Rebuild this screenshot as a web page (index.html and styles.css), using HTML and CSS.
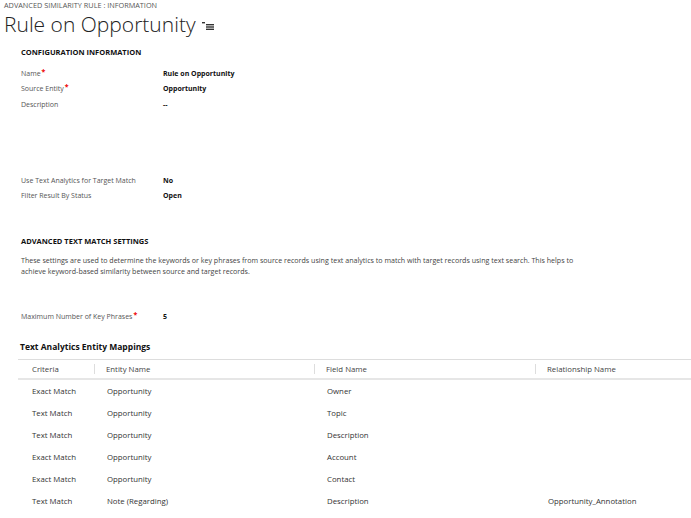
FILE: index.html
```html
<!DOCTYPE html>
<html lang="en">
<head>
    <meta charset="UTF-8">
    <title>Rule on Opportunity</title>
    <link rel="stylesheet" href="styles.css">
</head>
<body>
    <div class="header">
        <div class="breadcrumb">ADVANCED SIMILARITY RULE : INFORMATION</div>
        <h1 class="title">Rule on Opportunity
            <svg class="title-icon" width="12" height="8" viewBox="0 0 12 8">
                <rect x="0" y="0" width="3" height="1.4" fill="#333"/>
                <rect x="4" y="2" width="8" height="1.4" fill="#333"/>
                <rect x="4" y="4.3" width="8" height="1.4" fill="#333"/>
                <rect x="4" y="6.6" width="8" height="1.4" fill="#333"/>
            </svg>
        </h1>
    </div>

    <div class="section">
        <h2 class="section-title">CONFIGURATION INFORMATION</h2>
        <div class="field"><span class="label">Name<span class="req">*</span></span><span class="value">Rule on Opportunity</span></div>
        <div class="field"><span class="label">Source Entity<span class="req">*</span></span><span class="value">Opportunity</span></div>
        <div class="field field-tall"><span class="label">Description</span><span class="value">--</span></div>
        <div class="field"><span class="label">Use Text Analytics for Target Match</span><span class="value">No</span></div>
        <div class="field"><span class="label">Filter Result By Status</span><span class="value">Open</span></div>
    </div>

    <div class="section section-advanced">
        <h2 class="section-title">ADVANCED TEXT MATCH SETTINGS</h2>
        <p class="note">These settings are used to determine the keywords or key phrases from source records using text analytics to match with target records using text search. This helps to achieve keyword-based similarity between source and target records.</p>
        <div class="field"><span class="label">Maximum Number of Key Phrases<span class="req">*</span></span><span class="value">5</span></div>
    </div>

    <div class="mappings">
        <h3 class="mappings-title">Text Analytics Entity Mappings</h3>
        <table class="grid">
            <thead>
                <tr>
                    <th class="col-criteria">Criteria</th>
                    <th class="col-entity">Entity Name</th>
                    <th class="col-field">Field Name</th>
                    <th class="col-rel">Relationship Name</th>
                </tr>
            </thead>
            <tbody>
                <tr><td>Exact Match</td><td>Opportunity</td><td>Owner</td><td></td></tr>
                <tr><td>Text Match</td><td>Opportunity</td><td>Topic</td><td></td></tr>
                <tr><td>Text Match</td><td>Opportunity</td><td>Description</td><td></td></tr>
                <tr><td>Exact Match</td><td>Opportunity</td><td>Account</td><td></td></tr>
                <tr><td>Exact Match</td><td>Opportunity</td><td>Contact</td><td></td></tr>
                <tr><td>Text Match</td><td>Note (Regarding)</td><td>Description</td><td>Opportunity_Annotation</td></tr>
            </tbody>
        </table>
    </div>
</body>
</html>
```

FILE: styles.css
```css
/* Page */
body {
    margin: 0;
    font-family: "Open Sans", "Noto Sans", sans-serif;
    color: #333;
    background: #fff;
}
/* Header */
.header {
    padding: 0 0 0 4px;
}
.breadcrumb {
    font-size: 7.3px;
    line-height: 10px;
    color: #555;
}
.title {
    margin: 0;
    font-size: 21px;
    font-weight: 300;
    line-height: 28px;
    color: #222;
    display: flex;
    align-items: center;
}
.title-icon {
    margin-left: 6px;
    margin-top: 3px;
}
/* Sections */
.section {
    padding: 8px 0 0 21px;
}
.section-title {
    margin: 0 0 8px 0;
    font-size: 7.5px;
    font-weight: 700;
    line-height: 12px;
    color: #111;
}
.field {
    display: flex;
    font-size: 7px;
    line-height: 15.3px;
}
.field-tall {
    height: 76px;
}
.label {
    width: 142px;
    color: #555;
}
.req {
    color: #e00;
    font-weight: 700;
    line-height: 0;
    position: relative;
    top: -2px;
    margin-left: 1px;
}
.value {
    font-weight: 700;
    color: #111;
}
.section-advanced {
    padding-top: 32px;
}
.section-advanced .section-title {
    margin-bottom: 8px;
}
.note {
    margin: 0 0 32px 0;
    font-size: 7.1px;
    line-height: 11px;
    color: #444;
    width: 560px;
}
/* Mappings grid */
.mappings {
    padding: 17px 0 0 18px;
}
.mappings-title {
    margin: 0 0 6px 2px;
    font-size: 8.5px;
    font-weight: 700;
    line-height: 12px;
    color: #111;
}
.grid {
    width: 673px;
    border-collapse: collapse;
    font-size: 7.8px;
    color: #333;
}
.grid th {
    font-weight: 400;
    text-align: left;
    height: 18px;
    padding: 0 12px;
    border-top: 1px solid #ddd;
    border-bottom: 2px solid #e6e6e6;
    position: relative;
    color: #444;
}
.grid th + th::before {
    content: "";
    position: absolute;
    left: 0;
    top: 4px;
    bottom: 4px;
    border-left: 1px solid #ddd;
}
.grid .col-criteria { width: 76px; padding-left: 14px; box-sizing: border-box; }
.grid .col-entity { width: 220px; box-sizing: border-box; }
.grid .col-field { width: 221px; box-sizing: border-box; }
.grid td {
    height: 22px;
    padding: 0 12px 0 13px;
    vertical-align: middle;
}
.grid td:first-child {
    padding-left: 14px;
}
```
